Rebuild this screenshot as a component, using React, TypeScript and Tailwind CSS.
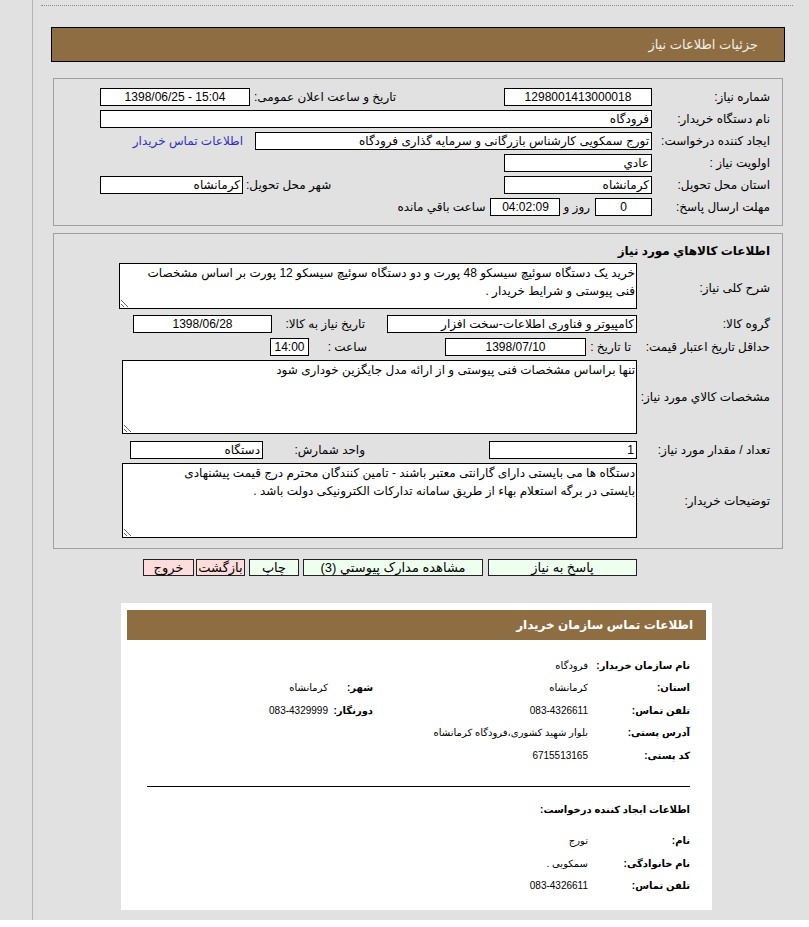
import React from "react";

const brown = "bg-[#8d6d41]";

function Box({ w, children, center, ltr }: { w: string; children?: React.ReactNode; center?: boolean; ltr?: boolean }) {
  return (
    <div
      dir={ltr ? "ltr" : undefined}
      className={`${w} h-[18px] shrink-0 border border-black bg-white px-[2px] text-[12px] leading-[16px] whitespace-nowrap overflow-hidden ${
        center ? "text-center" : "text-right"
      }`}
    >
      {children}
    </div>
  );
}

function Area({ w, h, value }: { w: string; h: string; value: string }) {
  return (
    <textarea
      readOnly
      dir="rtl"
      value={value}
      className={`${w} ${h} shrink-0 border border-black bg-white px-[1px] py-0 text-[12px] leading-[18px] text-black outline-none overflow-hidden`}
    />
  );
}

function InfoRow({ label, value, label2, value2 }: { label: string; value: string; label2?: string; value2?: string }) {
  return (
    <div className="flex items-center h-[22.5px] whitespace-nowrap">
      <div className="w-[102px] shrink-0 font-bold text-[10px]">{label}</div>
      <div className="w-[215px] shrink-0 text-[10px]">{value}</div>
      {label2 && <div className="w-[45px] shrink-0 font-bold text-[10px]">{label2}</div>}
      {value2 && <div className="text-[10px]">{value2}</div>}
    </div>
  );
}

export default function App() {
  return (
    <div className="min-h-screen bg-white text-black font-['Liberation_Sans','DejaVu_Sans',sans-serif]">
      <div className="flex h-[920px] bg-[#e1e1e1]">
        <div className="w-[33px] shrink-0 border-r border-[#b4b4b4]" />
        <div dir="rtl" className="flex-1 pl-[18px] pr-[24px]">
          <div className="mt-[5px] -ml-[10px] -mr-[8px] border-t border-dotted border-[#8a8a8a]" />

          {/* page title */}
          <div className={`mt-[21px] h-[35px] border border-black ${brown} flex items-center pr-[26px] text-[13px] text-[#f4f0e8]`}>
            جزئیات اطلاعات نیاز
          </div>

          {/* need details */}
          <div className="mt-[16px] mx-[2px] h-[148px] border border-[#a0a0a0] pt-[9px] pr-[12px] text-[12px]">
            <div className="flex h-[22px]">
              <div className="w-[118px] shrink-0 leading-[18px]">شماره نیاز:</div>
              <Box w="w-[148px]" center>1298001413000018</Box>
              <div className="w-[254px] shrink-0 text-left pl-[4px] leading-[18px]">تاریخ و ساعت اعلان عمومی:</div>
              <Box w="w-[150px]" center ltr>1398/06/25 - 15:04</Box>
            </div>
            <div className="flex h-[22px]">
              <div className="w-[118px] shrink-0 leading-[18px]">نام دستگاه خریدار:</div>
              <Box w="w-[552px]">فرودگاه</Box>
            </div>
            <div className="flex h-[22px]">
              <div className="w-[118px] shrink-0 leading-[18px]">ایجاد کننده درخواست:</div>
              <Box w="w-[397px]">تورج سمکویی کارشناس بازرگانی و سرمایه گذاری فرودگاه</Box>
              <a className="mr-[12px] leading-[18px] text-[#3030c0]">اطلاعات تماس خریدار</a>
            </div>
            <div className="flex h-[22px]">
              <div className="w-[118px] shrink-0 leading-[18px]">اولویت نیاز :</div>
              <Box w="w-[148px]">عادي</Box>
            </div>
            <div className="flex h-[22px]">
              <div className="w-[118px] shrink-0 leading-[18px]">استان محل تحویل:</div>
              <Box w="w-[148px]">کرمانشاه</Box>
              <div className="w-[261px] shrink-0 text-left pl-[3px] leading-[18px]">شهر محل تحویل:</div>
              <Box w="w-[143px]">کرمانشاه</Box>
            </div>
            <div className="flex h-[22px]">
              <div className="w-[118px] shrink-0 leading-[18px]">مهلت ارسال پاسخ:</div>
              <Box w="w-[57px]" center>0</Box>
              <div className="mr-[5px] ml-[3px] leading-[18px]">روز و</div>
              <Box w="w-[70px]" center>04:02:09</Box>
              <div className="mr-[5px] leading-[18px]">ساعت باقي مانده</div>
            </div>
          </div>

          {/* goods */}
          <div className="mt-[7px] mx-[2px] border border-[#a0a0a0] pt-[8px] pb-[10px] pr-[12px] text-[12px]">
            <div className="font-bold text-[12px] leading-[18px]">اطلاعات كالاهاي مورد نياز</div>
            <div className="mt-[3px] flex items-center">
              <div className="w-[133px] shrink-0 pt-[4px]">شرح کلی نیاز:</div>
              <Area
                w="w-[518px]"
                h="h-[46px]"
                value={"خرید یک دستگاه سوئیچ سیسکو 48 پورت و دو دستگاه سوئیچ سیسکو 12 پورت بر اساس مشخصات\nفنی پیوستی و شرایط خریدار ."}
              />
            </div>
            <div className="mt-[6px] flex">
              <div className="w-[133px] shrink-0 leading-[18px]">گروه کالا:</div>
              <Box w="w-[250px]">کامپیوتر و فناوری اطلاعات-سخت افزار</Box>
              <div className="w-[115px] shrink-0 pr-[22px] leading-[18px]">تاریخ نیاز به کالا:</div>
              <Box w="w-[139px]" center>1398/06/28</Box>
            </div>
            <div className="mt-[5px] flex">
              <div className="w-[133px] shrink-0 leading-[18px] whitespace-nowrap">حداقل تاریخ اعتبار قیمت:</div>
              <div className="w-[51px] shrink-0 pr-[6px] leading-[18px] whitespace-nowrap">تا تاریخ :</div>
              <Box w="w-[141px]" center>1398/07/10</Box>
              <div className="w-[136px] shrink-0 pr-[78px] leading-[18px] whitespace-nowrap">ساعت :</div>
              <Box w="w-[39px]" center>14:00</Box>
            </div>
            <div className="mt-[4px] flex items-center">
              <div className="w-[133px] shrink-0">مشخصات کالاي مورد نیاز:</div>
              <Area w="w-[515px]" h="h-[74px]" value="تنها براساس مشخصات فنی پیوستی و از ارائه مدل جایگزین خوداری شود" />
            </div>
            <div className="mt-[7px] flex">
              <div className="w-[133px] shrink-0 leading-[18px]">تعداد / مقدار مورد نیاز:</div>
              <Box w="w-[148px]">1</Box>
              <div className="w-[226px] shrink-0 pr-[124px] leading-[18px] whitespace-nowrap">واحد شمارش:</div>
              <Box w="w-[133px]">دستگاه</Box>
            </div>
            <div className="mt-[4px] flex items-center">
              <div className="w-[133px] shrink-0">توضیحات خریدار:</div>
              <Area
                w="w-[515px]"
                h="h-[75px]"
                value={"دستگاه ها می بایستی دارای گارانتی معتبر باشند - تامین کنندگان محترم درج قیمت پیشنهادی\nبایستی در برگه استعلام بهاء از طریق سامانه تدارکات الکترونیکی دولت باشد ."}
              />
            </div>
          </div>

          {/* actions */}
          <div className="mt-[10px] mr-[148px] flex text-[13px] leading-[15px]">
            <button className="w-[149px] h-[17px] border border-[#222] bg-[#efffef]">پاسخ به نیاز</button>
            <button className="mr-[5px] w-[180px] h-[17px] border border-[#222] bg-[#efffef]">مشاهده مدارک پیوستي (3)</button>
            <button className="mr-[4px] w-[50px] h-[17px] border border-[#222] bg-[#efffef]">چاپ</button>
            <button className="mr-[4px] w-[49px] h-[17px] border border-[#222] bg-[#ffdcdc]">بازگشت</button>
            <button className="mr-[2px] w-[51px] h-[17px] border border-[#222] bg-[#ffdcdc]">خروج</button>
          </div>

          {/* buyer contact */}
          <div className="mt-[27px] mr-[73px] w-[591px] bg-white pt-[7px] pb-[13px]">
            <div className={`mx-[6px] h-[30px] ${brown} flex items-center pr-[13px] text-[12px] font-bold text-white`}>
              اطلاعات تماس سازمان خریدار
            </div>
            <div className="mt-[14px] pr-[22px]">
              <InfoRow label="نام سازمان خریدار:" value="فرودگاه" />
              <InfoRow label="استان:" value="کرمانشاه" label2="شهر:" value2="کرمانشاه" />
              <InfoRow label="تلفن تماس:" value="083-4326611" label2="دورنگار:" value2="083-4329999" />
              <InfoRow label="آدرس پستی:" value="بلوار شهید کشوری،فرودگاه کرمانشاه" />
              <InfoRow label="کد پستی:" value="6715513165" />
            </div>
            <div className="mt-[19px] mr-[22px] ml-[26px] border-t border-black" />
            <div className="mt-[14px] pr-[22px] font-bold text-[10px] leading-[18px]">اطلاعات ایجاد کننده درخواست:</div>
            <div className="mt-[11px] pr-[22px]">
              <InfoRow label="نام:" value="تورج" />
              <InfoRow label="نام خانوادگی:" value="سمکویی ." />
              <InfoRow label="تلفن تماس:" value="083-4326611" />
            </div>
          </div>
        </div>
      </div>
    </div>
  );
}
